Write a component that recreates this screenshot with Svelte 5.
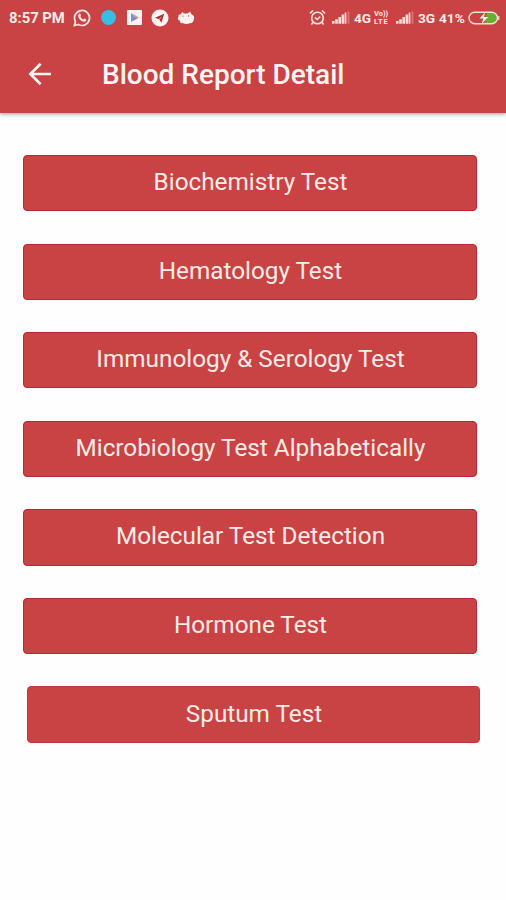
<script lang="ts">
  const tests: string[] = [
    "Biochemistry Test",
    "Hematology Test",
    "Immunology & Serology Test",
    "Microbiology Test Alphabetically",
    "Molecular Test Detection",
    "Hormone Test",
    "Sputum Test",
  ];
</script>

{#snippet signal()}
  <svg class="signal" width="18" height="13" viewBox="0 0 18 13">
    <path d="M0 10h2.6v2.8H0zM3.2 8.2h2.6v4.6H3.2zM6.4 6h2.6v6.8H6.4zM9.6 3.6h2.6v9.2H9.6zM12.7 1.4h1.7v11.4h-1.7z" fill="#fbdcd7" />
    <path d="M15.7 0.3h1.6v12.5h-1.6z" fill="#fbe3df" opacity="0.35" />
  </svg>
{/snippet}

<div class="screen">
  <header>
    <div class="status">
      <div class="group left">
        <span class="time">8:57 PM</span>
        <svg class="whatsapp" width="18" height="18" viewBox="0 0 18 18">
          <path d="M1.4 16.6l1.1-4A7.5 7.5 0 1 1 5.4 15.5z" fill="none" stroke="#fbe9e6" stroke-width="1.7" />
          <path d="M6.2 4.7c.5-.3 1-.2 1.2.3l.6 1.4c.1.4-.6 1-.7 1.2.7 1.4 1.6 2.3 3 2.9.4-.2.9-1.1 1.2-.9l1.6.8c.6.4 0 1.8-.9 2.2-2.9 1-7.7-3.4-7-6.4.2-.7.5-1.2 1-1.5z" fill="#fbe9e6" />
        </svg>
        <span class="dot"></span>
        <svg class="play" width="15" height="15" viewBox="0 0 15 15">
          <rect width="15" height="15" rx="1" fill="#fbf3f2" />
          <path d="M4 3v9l4-4.5z" fill="#4da6c9" />
          <path d="M4 3l8 4.5H7.5z" fill="#d98a93" />
          <path d="M4 12l8-4.5H7.5z" fill="#8579ae" />
        </svg>
        <svg class="telegram" width="18" height="18" viewBox="0 0 18 18">
          <circle cx="9" cy="9" r="8.5" fill="#fff6f4" />
          <path d="M4 8.8l9.2-4-2.8 9-2-3.4z" fill="#bd2630" />
          <path d="M7.3 11.1l3-3" stroke="#fff6f4" stroke-width="0.7" />
        </svg>
        <svg class="cat" width="18" height="14" viewBox="0 0 18 14">
          <path d="M4 3.2L5.1 1l2 1.5h3.3L13.2.8l1.4 2.6c2.2.5 3.3 3.2 2.2 4.8-.1 2.5-1.8 4.2-4 4.1-2 .9-5 .9-6.5 0-2.5.3-3.8-1-3.6-3C.7 9.2.3 7.2 1.5 5.9.8 4.2 2.2 3 4 3.2z" fill="#fff2ef" />
          <path d="M6 4.5v1.8M11.5 4v1.8" stroke="#dc8580" stroke-width="1" />
        </svg>
      </div>
      <div class="group right">
        <svg class="alarm" width="17" height="17" viewBox="0 0 17 17">
          <g fill="none" stroke="#fbe3df" stroke-width="1.6">
            <circle cx="8.5" cy="9" r="5.8" />
            <path d="M1 4.4l3-2.9M16 4.4l-3-2.9M4.2 13.2l-1.8 2.3M12.8 13.2l1.8 2.3M5.8 8.3l2.4 2.2 3-2.8" />
          </g>
        </svg>
        {@render signal()}
        <span class="net first">4G</span>
        <span class="volte"><span>Vo))</span><span class="lte">LTE</span></span>
        {@render signal()}
        <span class="net">3G</span>
        <span class="percent">41%</span>
        <svg class="battery" width="32" height="14" viewBox="0 0 32 14">
          <path d="M19 1.7h5.5a5.2 5.2 0 0 1 0 10.6H17z" fill="#62b22f" />
          <rect x="1" y="1.2" width="28.5" height="11.6" rx="5.8" fill="none" stroke="#f8dcd8" stroke-width="1.4" />
          <path d="M30.8 5v4" stroke="#f8dcd8" stroke-width="1.2" />
          <path d="M17 1.5l-5.5 6h3.8L13.7 13l6.4-7h-4z" fill="#fff5f2" />
        </svg>
      </div>
    </div>
    <div class="toolbar">
      <button class="back" aria-label="Back">
        <svg width="24" height="24" viewBox="0 0 24 24">
          <path d="M12.6 1.8L2.4 12l10.2 10.2M2.5 12H23" fill="none" stroke="#fff5f2" stroke-width="2.7" />
        </svg>
      </button>
      <h1>Blood Report Detail</h1>
    </div>
  </header>

  <main>
    {#each tests as test, i (test)}
      <button class="test" class:last={i === tests.length - 1}>{test}</button>
    {/each}
  </main>
</div>

<style>
  :global(body) {
    margin: 0;
    background: #fff;
  }
  .screen {
    width: 506px;
    height: 900px;
    overflow: hidden;
    background: #fefefe;
    font-family: Roboto, "Liberation Sans", sans-serif;
  }
  header {
    height: 113px;
    background: #c94244;
    box-shadow: 0 1px 4px rgba(70, 50, 60, 0.5);
  }
  .status {
    display: flex;
    justify-content: space-between;
    height: 36px;
    color: #fdece9;
    font-weight: 700;
  }
  .group {
    display: flex;
    align-items: center;
    height: 35px;
    white-space: nowrap;
  }
  .group svg,
  .group span {
    flex: none;
  }
  .left {
    padding-left: 9px;
  }
  .right {
    padding-right: 6px;
  }
  .time {
    width: 64px;
    font-size: 14.8px;
  }
  .dot {
    width: 15px;
    height: 15px;
    margin: 0 11px 0 10px;
    border-radius: 50%;
    background: #35bfe2;
  }
  .telegram {
    margin: 0 8px 0 9px;
  }
  .signal {
    margin: 0 4px 0 6px;
  }
  .net {
    width: 21px;
    font-size: 13.7px;
  }
  .net.first {
    width: 20px;
  }
  .volte {
    display: flex;
    flex-direction: column;
    width: 16px;
    font-size: 7.5px;
    line-height: 8px;
  }
  .lte {
    letter-spacing: 0.8px;
  }
  .percent {
    width: 29px;
    font-size: 13.7px;
  }
  .toolbar {
    display: flex;
    align-items: center;
    height: 77px;
  }
  button {
    border: 0;
    padding: 0;
    font-family: inherit;
  }
  .back {
    display: flex;
    width: 24px;
    height: 24px;
    margin: 0 50px 2px 28px;
    background: none;
  }
  h1 {
    margin: 0;
    color: #fff5f2;
    font-size: 28px;
    font-weight: 500;
    line-height: 36px;
    white-space: nowrap;
  }
  main {
    display: flex;
    flex-direction: column;
    gap: 32.4px;
    padding: 42px 29px 0 23px;
  }
  .test {
    box-sizing: border-box;
    height: 56.2px;
    border: 1px solid #b92635;
    border-radius: 4px;
    padding: 0 0 2px 1px;
    background: #c94244;
    color: #fdebe7;
    font-size: 24.3px;
    line-height: 28px;
  }
  .last {
    margin: 0 -3px 0 4px;
    border-color: #c5363c;
  }
</style>
